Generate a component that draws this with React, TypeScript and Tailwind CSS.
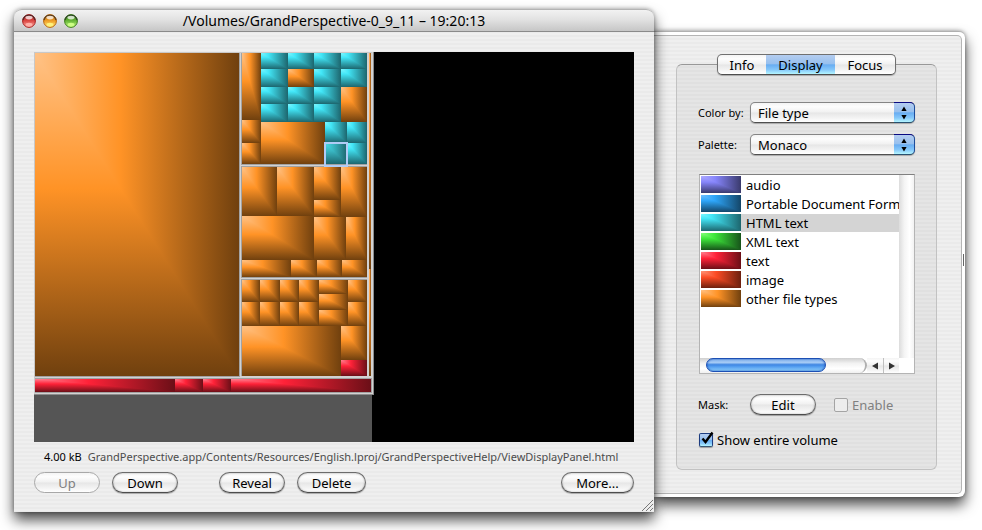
import React from "react";

const STRIPES =
  "bg-[repeating-linear-gradient(180deg,#efefef_0px,#efefef_2px,#eaeaea_2px,#eaeaea_4px)]";
const AQUA =
  "bg-[linear-gradient(180deg,#f4f4f4_0%,#fdfdfd_20%,#f1f1f1_48%,#e6e6e6_52%,#f4f4f4_80%,#ffffff_100%)]";
const AQUA_BLUE =
  "bg-[linear-gradient(180deg,#b4cdf0_0%,#97c0ee_46%,#68adf2_52%,#86c8fa_78%,#b4f6ff_100%)]";

type Tone = "orange" | "cyan" | "teal" | "red" | "violet" | "blue" | "green" | "vermilion";

/* Highlight, body and shade of each tone, and where the body colour sits */
const TONES: Record<Tone, [string, string, string, number]> = {
  orange: ["#ffc286", "#ff9326", "#70400e", 0.42],
  cyan: ["#7cf6ff", "#42e6f7", "#1d666e", 0.28],
  teal: ["#48dcea", "#38b4c0", "#1d666e", 0.4],
  red: ["#ff8090", "#ff2238", "#6b0f17", 0.38],
  violet: ["#aeaaff", "#8685fb", "#3a3a6c", 0.36],
  blue: ["#70bfff", "#2ea6fa", "#144668", 0.34],
  green: ["#82ff78", "#3de83a", "#17541a", 0.34],
  vermilion: ["#ff9478", "#fb4b24", "#6c200f", 0.38],
};

/* Every cell is lit from its top left corner: [tone, left, top, right, bottom] */
type Cell = [Tone, number, number, number, number];

const CELLS: Cell[] = [
  ["orange", 1, 1, 205, 324],

  ["orange", 208, 1, 227, 68],
  ["orange", 208, 68, 227, 91],
  ["orange", 208, 91, 227, 112],
  ["cyan", 227, 1, 254, 17],
  ["cyan", 254, 1, 280, 17],
  ["cyan", 280, 1, 307, 17],
  ["cyan", 307, 1, 333, 17],
  ["cyan", 227, 17, 254, 35],
  ["orange", 254, 17, 280, 35],
  ["cyan", 280, 17, 307, 35],
  ["cyan", 307, 17, 333, 35],
  ["cyan", 227, 35, 254, 52],
  ["cyan", 254, 35, 280, 52],
  ["cyan", 280, 35, 307, 52],
  ["cyan", 227, 52, 254, 70],
  ["cyan", 254, 52, 280, 70],
  ["cyan", 280, 52, 307, 70],
  ["orange", 307, 35, 333, 70],
  ["orange", 227, 70, 291, 112],
  ["cyan", 291, 70, 313, 91],
  ["cyan", 313, 70, 333, 91],
  ["teal", 291, 91, 313, 112],
  ["cyan", 313, 91, 333, 112],

  ["orange", 208, 115, 243, 164],
  ["orange", 243, 115, 280, 164],
  ["orange", 280, 115, 307, 148],
  ["orange", 280, 148, 307, 165],
  ["orange", 307, 115, 333, 165],
  ["orange", 208, 164, 280, 208],
  ["orange", 280, 165, 312, 208],
  ["orange", 312, 165, 333, 208],
  ["orange", 208, 208, 257, 225],
  ["orange", 257, 208, 283, 225],
  ["orange", 283, 208, 308, 225],
  ["orange", 308, 208, 333, 225],

  ["orange", 208, 228, 226, 250],
  ["orange", 226, 228, 246, 250],
  ["orange", 246, 228, 265, 250],
  ["orange", 265, 228, 285, 250],
  ["orange", 285, 228, 314, 242],
  ["orange", 285, 242, 314, 258],
  ["orange", 285, 258, 314, 274],
  ["orange", 314, 228, 333, 250],
  ["orange", 208, 250, 226, 274],
  ["orange", 226, 250, 246, 274],
  ["orange", 246, 250, 265, 274],
  ["orange", 265, 250, 285, 274],
  ["orange", 314, 250, 333, 274],
  ["orange", 208, 274, 307, 324],
  ["orange", 307, 274, 333, 308],
  ["red", 307, 308, 333, 324],

  ["orange", 335, 1, 337, 217],
  ["orange", 335, 217, 337, 324],

  ["red", 1, 327, 141, 340],
  ["red", 141, 327, 169, 340],
  ["red", 169, 327, 197, 340],
  ["red", 197, 327, 337, 340],
];

const GROUPS = [
  [0, 0, 206, 325],
  [207, 0, 333, 113],
  [207, 114, 333, 226],
  [207, 227, 333, 324],
  [0, 326, 338, 341],
];

function Gradients({ id, tone }: { id: string; tone: Tone }) {
  const [light, base, dark, middle] = TONES[tone];
  const stops = (
    <>
      <stop offset="0" stopColor={light} />
      <stop offset={middle} stopColor={base} />
      <stop offset="1" stopColor={dark} />
    </>
  );
  return (
    <>
      <linearGradient id={`${id}-${tone}-h`} x1="0" y1="0" x2="1" y2="0">{stops}</linearGradient>
      <linearGradient id={`${id}-${tone}-v`} x1="0" y1="0" x2="0" y2="1">{stops}</linearGradient>
    </>
  );
}

function Cushion({ id, cell }: { id: string; cell: Cell }) {
  const [tone, l, t, r, b] = cell;
  return (
    <>
      <rect x={l} y={t} width={r - l} height={b - t} fill={`url(#${id}-${tone}-h)`} shapeRendering="crispEdges" />
      {/* The gradient box of the lower half spans the whole cell, as the triangle does */}
      <polygon points={`${l},${t} ${r},${b} ${l},${b}`} fill={`url(#${id}-${tone}-v)`} />
    </>
  );
}

function TreeMap() {
  return (
    <svg viewBox="0 0 600 390" className="block h-auto w-full" role="img" aria-label="Disk usage map">
      <defs>
        <Gradients id="map" tone="orange" />
        <Gradients id="map" tone="cyan" />
        <Gradients id="map" tone="teal" />
        <Gradients id="map" tone="red" />
      </defs>
      <rect width="600" height="390" fill="#000" />
      <rect width="338" height="390" fill="#555" />
      <rect width="340" height="343" fill="#8c8c8c" />
      <rect width="339" height="342" fill="#d2d2d2" />
      {GROUPS.map(([l, t, r, b]) => (
        <rect key={`${l}-${t}`} x={l} y={t} width={r - l} height={b - t} fill="#a2a2a2" />
      ))}
      <path d="M0 .5H338M.5 0V342" stroke="#c8c8c8" />
      {CELLS.map((c) => (
        <Cushion key={c.join()} id="map" cell={c} />
      ))}
      <rect x="291" y="91" width="22" height="23" fill="none" stroke="#b0cbf6" strokeWidth="2" />
    </svg>
  );
}

function Light({ id, edge, core, glow }: { id: string; edge: string; core: string; glow: string }) {
  return (
    <svg viewBox="0 0 14 14" className="size-[14px]" aria-hidden="true">
      <defs>
        <linearGradient id={id} x1="0" y1="0" x2="0" y2="1">
          <stop offset="0" stopColor={edge} />
          <stop offset="0.5" stopColor={core} />
          <stop offset="1" stopColor={glow} />
        </linearGradient>
      </defs>
      <circle cx="7" cy="7" r="6.4" fill={`url(#${id})`} stroke={edge} strokeWidth="1" />
      <path d="M1 6A6.2 6.2 0 0 1 13 6" fill="none" stroke="#222" strokeOpacity="0.65" strokeWidth="1.4" />
      <ellipse cx="7" cy="3.6" rx="3.6" ry="1.8" fill="#fff" fillOpacity="0.75" />
      <ellipse cx="7" cy="10.6" rx="3.4" ry="1.8" fill={glow} />
    </svg>
  );
}

function PushButton({ children, width, disabled }: { children: React.ReactNode; width: string; disabled?: boolean }) {
  return (
    <button
      type="button"
      disabled={disabled}
      className={`flex h-[21px] items-center justify-center rounded-full border text-[13px] leading-4 ${AQUA} ${width} ${
        disabled
          ? "border-[#a8a8a8] text-[#808080]"
          : "border-[#6c6c6c] border-b-[#4c4c4c] text-black shadow-[0_1px_1px_rgba(0,0,0,0.3),inset_0_0_2px_rgba(0,0,0,0.35)]"
      }`}
    >
      {children}
    </button>
  );
}

function PopUp({ id, label, value }: { id: string; label: string; value: string }) {
  return (
    <div className="flex items-center">
      <label htmlFor={id} className="w-[52px] text-[11px] leading-4">{label}</label>
      <div className="relative flex-1">
        <select
          id={id}
          className={`block h-[21px] w-full appearance-none rounded-[5px] border border-[#858585] border-b-[#4f4f4f] pl-[7px] text-[13px] leading-4 text-black shadow-[0_1px_1px_rgba(0,0,0,0.25)] ${AQUA}`}
        >
          <option>{value}</option>
        </select>
        <span
          className={`pointer-events-none absolute inset-y-0 right-0 flex w-[21px] items-center justify-center rounded-r-[5px] border border-l-0 border-t-[#0a0a80] border-r-[#1d4d9c] border-b-[#285070] ${AQUA_BLUE}`}
        >
          <svg viewBox="0 0 6 14" className="h-[14px] w-[6px]" aria-hidden="true">
            <path d="M3 0.5L5.6 5H0.4ZM3 13.5L5.6 9H0.4Z" fill="#000" />
          </svg>
        </span>
      </div>
    </div>
  );
}

const TYPES: { name: string; tone: Tone }[] = [
  { name: "audio", tone: "violet" },
  { name: "Portable Document Format", tone: "blue" },
  { name: "HTML text", tone: "cyan" },
  { name: "XML text", tone: "green" },
  { name: "text", tone: "red" },
  { name: "image", tone: "vermilion" },
  { name: "other file types", tone: "orange" },
];

function TypeList() {
  return (
    <div className="ml-px flex h-[200px] flex-col border border-[#b4b4b4] border-t-[#808080] bg-white">
      <div className="flex min-h-0 flex-1">
        <ul role="listbox" aria-label="File types" className="min-w-0 flex-1 overflow-hidden">
          {TYPES.map(({ name, tone }) => {
            const selected = name === "HTML text";
            return (
              <li key={name} role="option" aria-selected={selected} className="flex h-[19px] items-center pl-px">
                <svg viewBox="0 0 40 17" className="h-[17px] w-[40px] shrink-0" aria-hidden="true">
                  <defs>
                    <Gradients id="list" tone={tone} />
                  </defs>
                  <Cushion id="list" cell={[tone, 0, 0, 40, 17]} />
                </svg>
                <span
                  className={`h-[18px] flex-1 pl-[5px] text-[13px] leading-[18px] whitespace-nowrap ${selected ? "bg-[#d4d4d4]" : ""}`}
                >
                  {name}
                </span>
              </li>
            );
          })}
        </ul>
        <div className="w-[15px] shrink-0 bg-[linear-gradient(90deg,#dcdcdc,#f4f4f4_35%,#ffffff_70%,#f2f2f2)]" />
      </div>
      <div className="flex h-[15px]">
        <div className="flex flex-1 rounded-r-full border-r-2 border-[#b0b0b0] bg-[linear-gradient(180deg,#cfcfcf,#f2f2f2_35%,#ffffff_70%,#f0f0f0)] pl-[6px]">
          <div className="h-[14px] w-[120px] rounded-full border border-[#1c4fb4] bg-[linear-gradient(180deg,#86b4ee_0%,#a4caf5_30%,#3f86e2_48%,#4d98ee_60%,#8fd0fb_100%)] shadow-[inset_0_0_2px_#1c4fb4]" />
        </div>
        <div className={`flex w-[32px] ${AQUA}`}>
          <button type="button" aria-label="Scroll left" className="flex w-[17px] items-center justify-center border-r border-[#c0c0c0]">
            <svg viewBox="0 0 6 8" className="h-[8px] w-[6px]"><path d="M6 0.5V7.5L0 4Z" fill="#333" /></svg>
          </button>
          <button type="button" aria-label="Scroll right" className="flex flex-1 items-center justify-center">
            <svg viewBox="0 0 6 8" className="h-[8px] w-[6px]"><path d="M0 0.5V7.5L6 4Z" fill="#333" /></svg>
          </button>
        </div>
        <div className="w-[15px] bg-white" />
      </div>
    </div>
  );
}

function MainWindow() {
  return (
    <main className={`relative z-10 min-w-0 flex-1 rounded-t-[8px] shadow-[0_8px_14px_rgba(0,0,0,0.7),0_0_4px_rgba(0,0,0,0.35)] ${STRIPES}`}>
      <header className="flex h-[23px] items-center rounded-t-[8px] border-t border-b border-t-[#b4b4b4] border-b-[#8a8a8a] bg-[linear-gradient(180deg,#f2f2f2_0%,#e2e2e2_45%,#c6c6c6_100%)] px-[8px]">
        <div className="flex w-[60px] gap-[7px]">
          <Light id="close" edge="#a8201f" core="#dd4a45" glow="#ffb0a8" />
          <Light id="minimize" edge="#b8650c" core="#f0a028" glow="#fff27c" />
          <Light id="zoom" edge="#3c7d1c" core="#68b838" glow="#ccff84" />
        </div>
        <h1 className="flex-1 text-center text-[14px] leading-4">/Volumes/GrandPerspective-0_9_11 – 19:20:13</h1>
        <div className="w-[60px]" />
      </header>
      <div className="px-5 pt-5 pb-[19px]">
        <TreeMap />
        <p className="mt-[7px] flex gap-[6px] pl-[10px] text-[11px] leading-4 whitespace-nowrap">
          <span>4.00 kB</span>
          <span className="text-[#4c4c4c]">
            GrandPerspective.app/Contents/Resources/English.lproj/GrandPerspectiveHelp/ViewDisplayPanel.html
          </span>
        </p>
        <div className="mt-[7px] flex gap-3">
          <PushButton width="w-[66px]" disabled>Up</PushButton>
          <PushButton width="w-[66px]">Down</PushButton>
          <div className="ml-[29px] flex flex-1 gap-3">
            <PushButton width="w-[66px]">Reveal</PushButton>
            <PushButton width="w-[69px]">Delete</PushButton>
          </div>
          <PushButton width="w-[73px]">More...</PushButton>
        </div>
      </div>
      <svg viewBox="0 0 12 12" className="absolute right-px bottom-px size-[12px]" aria-hidden="true">
        <path d="M1 12L12 1M5 12L12 5M9 12L12 9" stroke="#777" strokeWidth="1" />
      </svg>
    </main>
  );
}

function Drawer() {
  return (
    <aside className="mt-[22px] flex w-[311px] shrink-0 rounded-r-[6px] border-t border-[#b0b0b0] bg-white pt-[3px] pb-[3px] shadow-[0_8px_14px_rgba(0,0,0,0.7),0_0_4px_rgba(0,0,0,0.4)]">
      <div className={`min-w-0 flex-1 rounded-r-[5px] border border-l-0 border-[#b4b4b4] pt-[18px] pr-6 pb-[23px] pl-[22px] ${STRIPES}`}>
        <nav className="relative z-10 flex justify-center">
          <div className={`flex h-[21px] overflow-hidden rounded-[5px] border border-[#707070] border-b-[#4c4c4c] text-[13px] leading-4 shadow-[0_1px_1px_rgba(0,0,0,0.25)] ${AQUA}`}>
            <button type="button" className="w-[48px]">Info</button>
            <button type="button" aria-pressed="true" className={`-mt-px w-[69px] border-t border-t-[#0a0a80] ${AQUA_BLUE}`}>Display</button>
            <button type="button" className="w-[60px]">Focus</button>
          </div>
        </nav>
        <section className="-mt-[11px] rounded-[6px] border border-[#c2c2c2] border-t-[#989898] bg-black/4 px-[21px] pt-[37px] pb-[18px]">
          <div className="flex flex-col gap-[11px]">
            <PopUp id="color-by" label="Color by:" value="File type" />
            <PopUp id="palette" label="Palette:" value="Monaco" />
          </div>
          <div className="mt-[19px]">
            <TypeList />
          </div>
          <div className="mt-5 flex items-center">
            <span className="w-[52px] text-[11px] leading-4">Mask:</span>
            <PushButton width="w-[66px]">Edit</PushButton>
            <label className="ml-[18px] flex items-center gap-1 text-[13px] leading-4 text-[#808080]">
              <input type="checkbox" disabled className="size-[14px] appearance-none rounded-[2px] border border-[#a4a4a4] bg-[#ededed]" />
              Enable
            </label>
          </div>
          <label className="mt-[14px] flex h-[22px] items-center gap-1 pl-px text-[13px] leading-4">
            <span className="relative flex">
              <input
                type="checkbox"
                defaultChecked
                className={`size-[14px] appearance-none rounded-[2px] border border-[#1c3c80] border-b-[#3a5a78] shadow-[0_1px_1px_rgba(0,0,0,0.3)] ${AQUA_BLUE}`}
              />
              <svg viewBox="0 0 16 16" className="pointer-events-none absolute -top-[2px] left-0 size-[16px]" aria-hidden="true">
                <path d="M3.5 7.5L6.5 11L13.5 1.5" fill="none" stroke="#000" strokeWidth="2.4" />
              </svg>
            </span>
            Show entire volume
          </label>
        </section>
      </div>
      <div className="flex w-[3px] shrink-0 items-center justify-center pb-[10px]">
        <div className="h-[12px] w-px bg-[#666]" />
      </div>
    </aside>
  );
}

export default function App() {
  return (
    <div className="flex items-start bg-white pt-[9px] pr-[17px] pb-[18px] pl-[14px] font-['Lucida_Grande','Noto_Sans',sans-serif] text-black">
      <MainWindow />
      <Drawer />
    </div>
  );
}
